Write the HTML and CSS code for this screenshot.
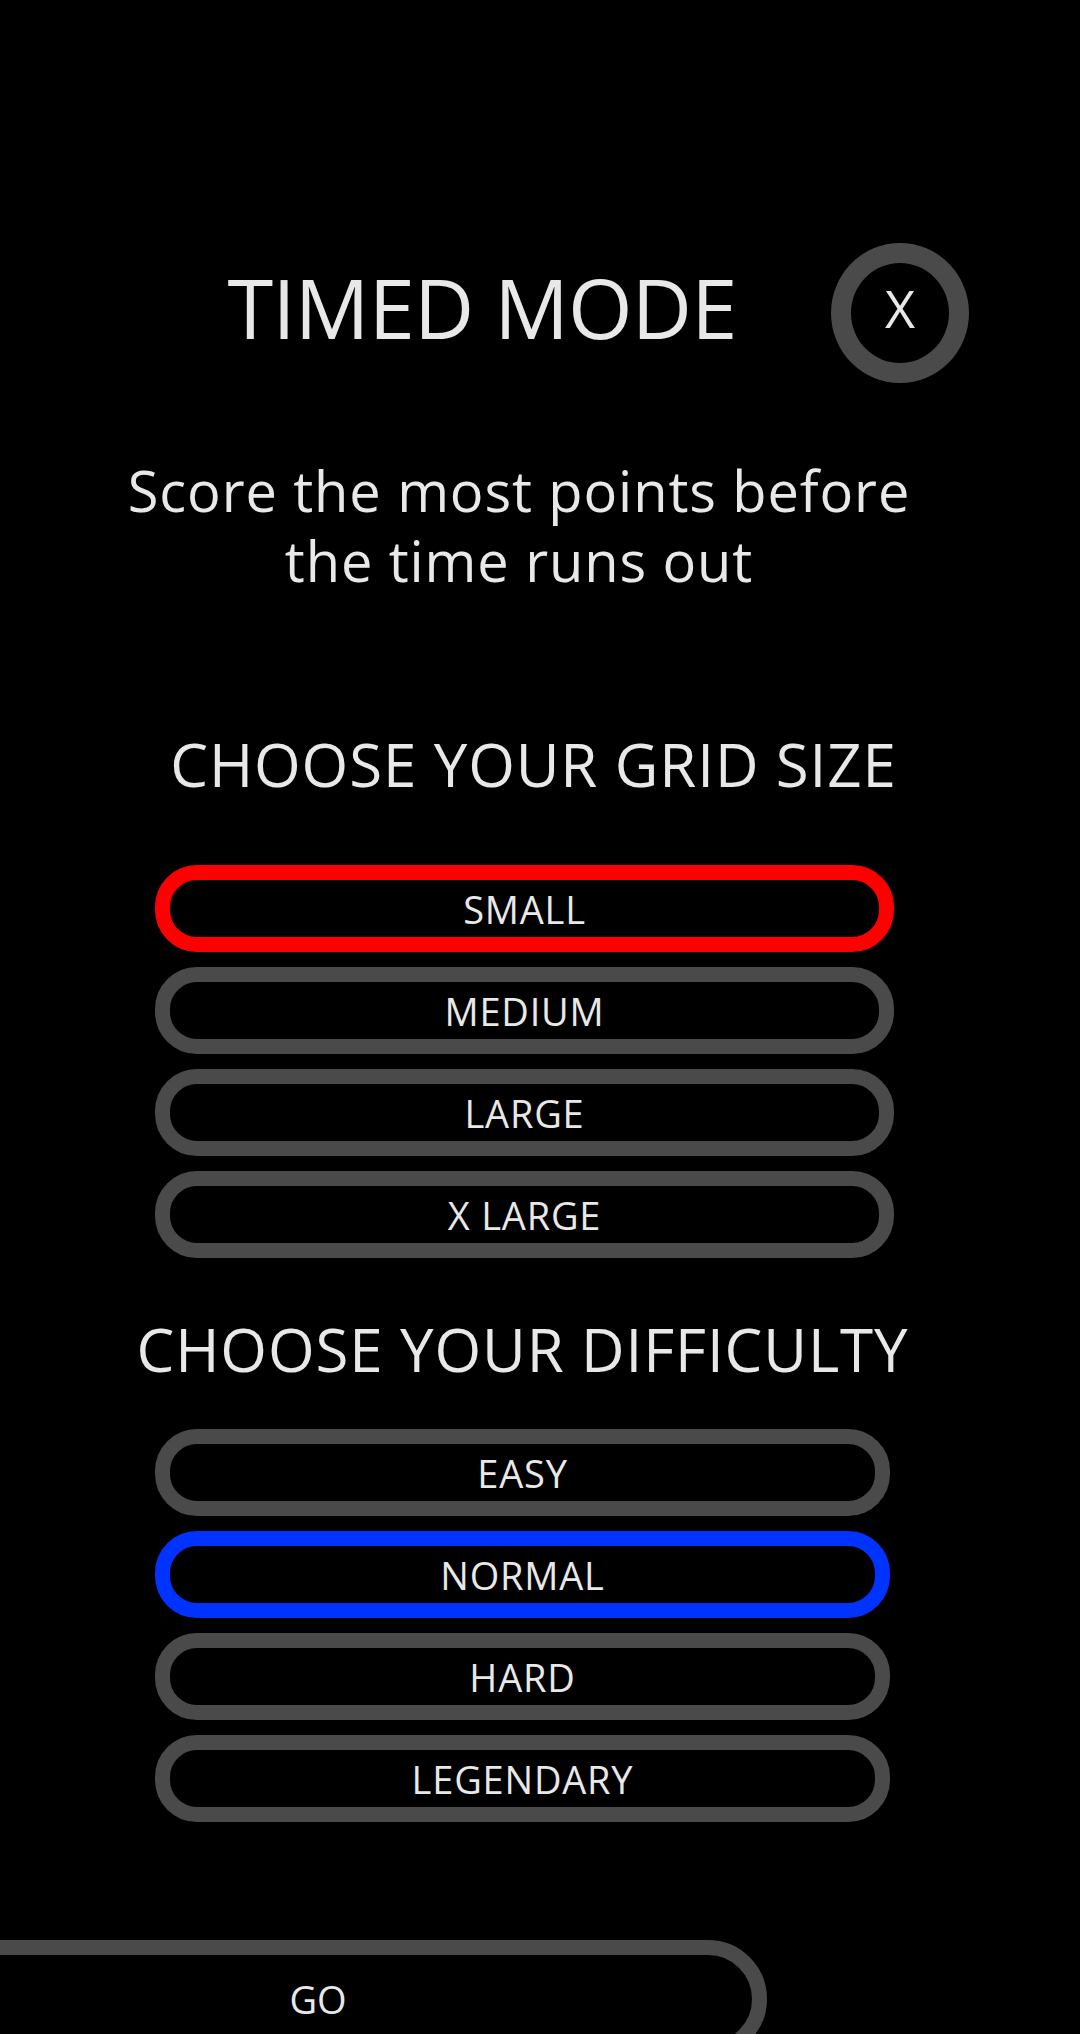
FILE: index.html
```html
<!DOCTYPE html>
<html lang="en">
<head>
<meta charset="utf-8">
<title>Timed Mode</title>
<link rel="stylesheet" href="styles.css">
</head>
<body>
<main class="screen">
  <header class="head">
    <h1 class="title">TIMED MODE</h1>
    <button class="close" type="button" aria-label="Close">X</button>
  </header>

  <p class="desc">Score the most points before<br>the time runs out</p>

  <h2 class="section-title section-title--grid">CHOOSE YOUR GRID SIZE</h2>
  <div class="options options--grid">
    <button class="opt opt--red" type="button">SMALL</button>
    <button class="opt" type="button">MEDIUM</button>
    <button class="opt" type="button">LARGE</button>
    <button class="opt" type="button">X LARGE</button>
  </div>

  <h2 class="section-title section-title--diff">CHOOSE YOUR DIFFICULTY</h2>
  <div class="options options--diff">
    <button class="opt" type="button">EASY</button>
    <button class="opt opt--blue" type="button">NORMAL</button>
    <button class="opt" type="button">HARD</button>
    <button class="opt" type="button">LEGENDARY</button>
  </div>

  <button class="go" type="button">GO</button>
</main>
</body>
</html>
```

FILE: styles.css
```css
html, body {
  margin: 0;
  padding: 0;
  background: #000;
  height: 100%;
  overflow: hidden;
}

body {
  font-family: "Open Sans", "DejaVu Sans", sans-serif;
  color: #e8e8e8;
}

.screen {
  width: 1045px;
  display: flex;
  flex-direction: column;
}

button {
  font-family: inherit;
  color: inherit;
  background: transparent;
  padding: 0;
  margin: 0;
  cursor: pointer;
}

/* header */
.head {
  display: flex;
  align-items: flex-start;
  padding-top: 243px;
  padding-left: 160px;
}

.title {
  flex: 0 0 644px;
  margin: 14px 0 0 0;
  font-size: 83px;
  line-height: 100px;
  font-weight: 400;
  text-align: center;
  letter-spacing: -0.8px;
}

.close {
  flex: 0 0 auto;
  width: 138px;
  height: 140px;
  margin-left: 27px;
  border: 20px solid #4a4a4a;
  border-radius: 50%;
  font-size: 52px;
  line-height: 1;
  padding-bottom: 10px;
  display: flex;
  align-items: center;
  justify-content: center;
  box-sizing: border-box;
}

/* description */
.desc {
  margin: 72px 0 0 0;
  padding-right: 7px;
  font-size: 56px;
  line-height: 70px;
  text-align: center;
  letter-spacing: 0.9px;
}

/* section titles */
.section-title {
  margin: 0;
  font-size: 60px;
  line-height: 70px;
  font-weight: 400;
  text-align: center;
  letter-spacing: 0.9px;
}

.section-title--grid {
  margin-top: 134px;
  padding-left: 22px;
}

.section-title--diff {
  margin-top: 56px;
}

/* option buttons */
.options {
  display: flex;
  flex-direction: column;
  gap: 15px;
}

.options--grid {
  margin: 66px 151px 0 155px;
}

.options--diff {
  margin: 45px 155px 0 155px;
}

.opt {
  box-sizing: border-box;
  height: 87px;
  border: 15px solid #4a4a4a;
  border-radius: 42px;
  font-size: 38px;
  line-height: 1;
  letter-spacing: 0.8px;
  display: flex;
  align-items: center;
  justify-content: center;
}

.opt--red {
  border-color: #ff0000;
}

.opt--blue {
  border-color: #0033ff;
}

/* go */
.go {
  box-sizing: border-box;
  margin: 118px 0 0 -131px;
  width: 898px;
  height: 118px;
  border: 15px solid #4a4a4a;
  border-radius: 59px;
  font-size: 38px;
  line-height: 1;
  display: flex;
  align-items: center;
  justify-content: center;
}
```
